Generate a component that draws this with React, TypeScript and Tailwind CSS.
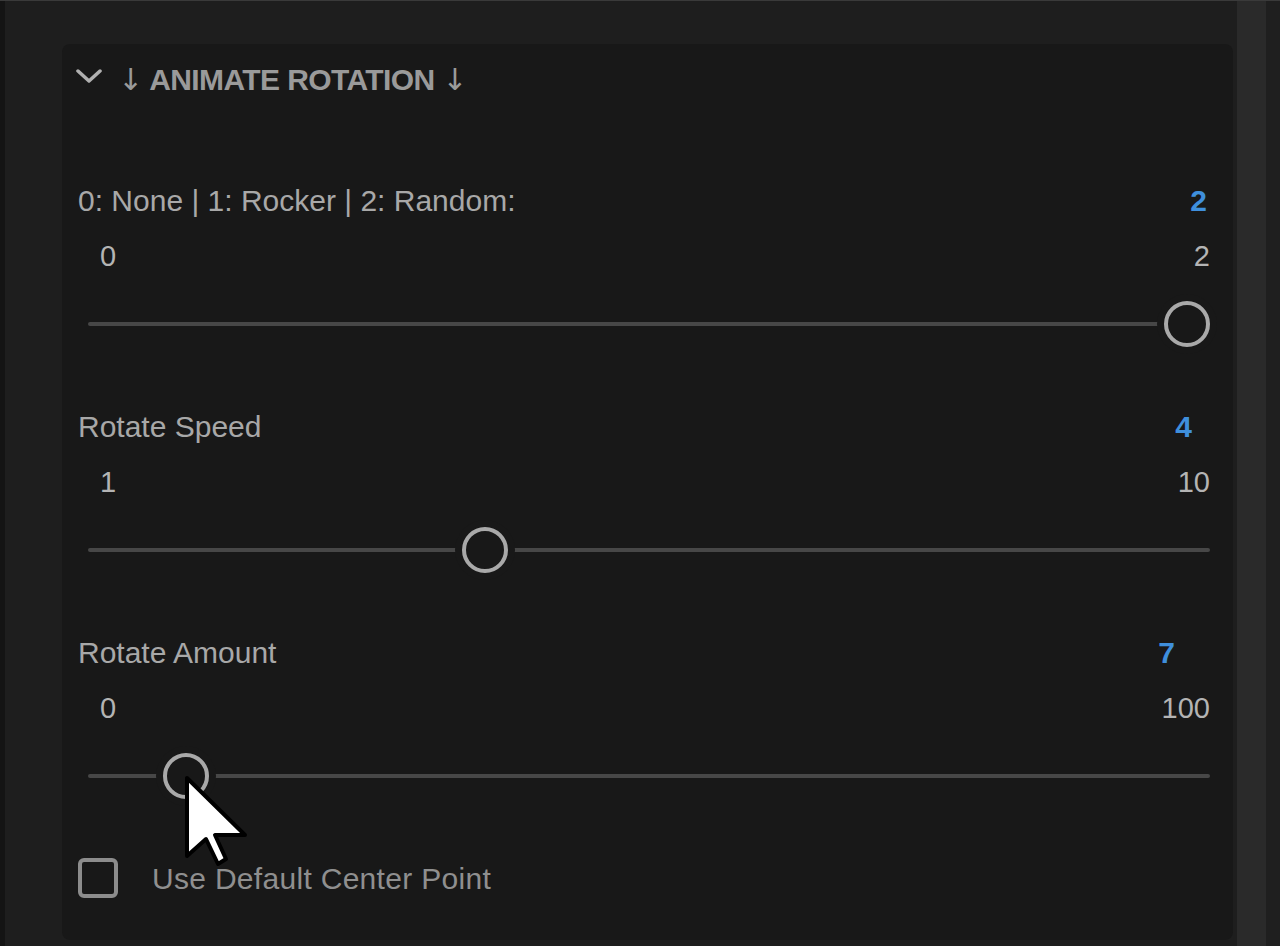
import React from "react";

type Row = {
  label: string;
  value: string;
  min: string;
  max: string;
  frac: number;
  valuePad: string;
  cursor?: boolean;
};

const rows: Row[] = [
  { label: "0: None | 1: Rocker | 2: Random:", value: "2", min: "0", max: "2", frac: 1, valuePad: "pr-[26px]" },
  { label: "Rotate Speed", value: "4", min: "1", max: "10", frac: 0.348, valuePad: "pr-[41px]" },
  { label: "Rotate Amount", value: "7", min: "0", max: "100", frac: 0.07, valuePad: "pr-[58px]", cursor: true },
];

function Cursor() {
  return (
    <svg
      className="absolute left-[17px] top-[18px] z-10"
      width="66"
      height="92"
      viewBox="-3 -3 66 92"
    >
      <polygon
        points="0,0 0,78 19,61 31,86 39,81 28,57 58,57"
        fill="#ffffff"
        stroke="#000000"
        strokeWidth="4"
        strokeLinejoin="round"
      />
    </svg>
  );
}

function Slider({ frac, cursor }: { frac: number; cursor?: boolean }) {
  // thumb is 46px wide, so it travels the track minus its own width
  const left = 23 + frac * (1122 - 46);
  return (
    <div className="relative h-[60px] ml-[10px] mr-[23px] flex items-center">
      <div className="h-[4px] w-full rounded-full bg-[#474747]" />
      <div
        className="absolute top-[7px] -ml-[23px] w-[46px] h-[46px] rounded-full border-4 border-[#a9a9a9] bg-[#181818] shadow-[0_0_0_7px_#181818]"
        style={{ left }}
      >
        {cursor && <Cursor />}
      </div>
    </div>
  );
}

export default function App() {
  return (
    <div
      className="flex h-[946px] w-full bg-[#1e1e1e] border-t border-[#3a3a3a] overflow-hidden"
      style={{ fontFamily: '"Liberation Sans", Arial, sans-serif' }}
    >
      <div className="w-[5px] bg-[#141414]" />
      <div className="flex-1 pl-[57px] pt-[43px] pb-[6px] pr-[4px]">
        <div className="h-full rounded-lg bg-[#181818] pl-[14px]">
          <div className="h-[72px] flex items-center gap-[16px]">
            <svg width="26" height="16" viewBox="0 0 26 16" className="mb-[6px]">
              <polyline points="2,2 13,12 24,2" fill="none" stroke="#b0b0b0" strokeWidth="3.5" strokeLinecap="round" strokeLinejoin="round" />
            </svg>
            <span className="text-[30px] font-bold text-[#9a9a9a] tracking-[-0.6px] leading-none">
              <span className="font-normal" style={{ fontFamily: '"DejaVu Sans", sans-serif' }}>↓</span> ANIMATE ROTATION{" "}
              <span className="font-normal" style={{ fontFamily: '"DejaVu Sans", sans-serif' }}>↓</span>
            </span>
          </div>
          <div className="h-[66px]" />
          {rows.map((r) => (
            <div key={r.label} className="pb-[54px] last:pb-[52px] pl-[2px]">
              <div className={`h-9 flex items-center justify-between ${r.valuePad}`}>
                <span className="text-[30px] text-[#a8a8a8]">{r.label}</span>
                <span className="text-[30px] font-bold text-[#3f8fdc]">{r.value}</span>
              </div>
              <div className="mt-[21px] h-9 flex items-center justify-between pl-[22px] pr-[23px] text-[29px] text-[#b4b4b4]">
                <span>{r.min}</span>
                <span>{r.max}</span>
              </div>
              <div className="mt-[19px]">
                <Slider frac={r.frac} cursor={r.cursor} />
              </div>
            </div>
          ))}
          <div className="flex items-center gap-[34px] h-[40px] pl-[2px] -mt-[2px]">
            <div className="w-[40px] h-[40px] rounded-md border-4 border-[#8c8c8c]" />
            <span className="text-[30px] text-[#8f8f8f] tracking-[0.3px]">Use Default Center Point</span>
          </div>
        </div>
      </div>
      <div className="w-[29px] bg-[#2a2a2a]" />
      <div className="w-[14px] bg-[#1f1f1f]" />
    </div>
  );
}
